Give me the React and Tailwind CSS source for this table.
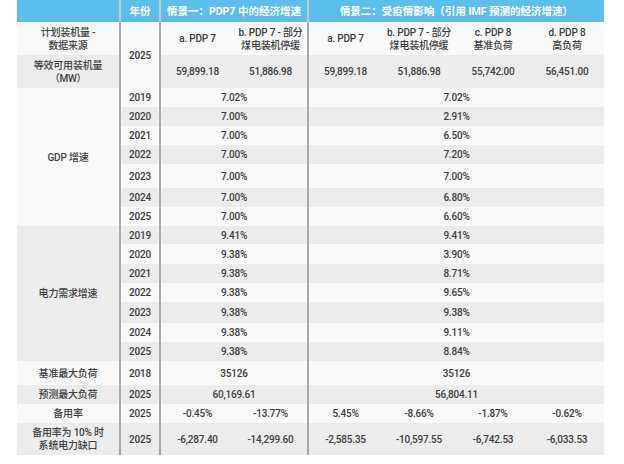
const LINE = 'border-[#a9a9a9]'
const WHITE = 'bg-[#fafafa]'
const GRAY = 'bg-[#ececec]'

const gdp = [
  ['2019', '7.02%', '7.02%', 'h-[19px]'],
  ['2020', '7.00%', '2.91%', 'h-[19px]'],
  ['2021', '7.00%', '6.50%', 'h-[19px]'],
  ['2022', '7.00%', '7.20%', 'h-[19px]'],
  ['2023', '7.00%', '7.00%', 'h-[24px]'],
  ['2024', '7.00%', '6.80%', 'h-[19px]'],
  ['2025', '7.00%', '6.60%', 'h-[19px]'],
]

const power = [
  ['2019', '9.41%', '9.41%', 'h-[18px]'],
  ['2020', '9.38%', '3.90%', 'h-[20px]'],
  ['2021', '9.38%', '8.71%', 'h-[19px]'],
  ['2022', '9.38%', '9.65%', 'h-[19px]'],
  ['2023', '9.38%', '9.38%', 'h-[21px]'],
  ['2024', '9.38%', '9.11%', 'h-[19px]'],
  ['2025', '9.38%', '8.84%', 'h-[19px]'],
]

function Year({ children, rowSpan, className = '' }) {
  return (
    <td rowSpan={rowSpan} className={`border-x-2 ${LINE} ${className}`}>
      {children}
    </td>
  )
}

function SplitRow({ label, year, s1, s2, bg, h }) {
  return (
    <tr className={`${bg} ${h}`}>
      <td>{label}</td>
      <Year>{year}</Year>
      <td colSpan={2} className={`border-r-2 ${LINE}`}>{s1}</td>
      <td colSpan={4}>{s2}</td>
    </tr>
  )
}

export default function App() {
  return (
    <div className="w-[624px] h-[464px] bg-white pl-[17px] font-['Roboto','Noto_Sans_CJK_SC',sans-serif] text-[10px] leading-[13px] font-medium text-[#404040] tracking-[-0.2px]">
      <table className="w-[587px] table-fixed border-collapse text-center [&_td]:p-0 [&_td]:align-middle [&_th]:p-0">
        <colgroup>
          <col className="w-[103px]" />
          <col className="w-[40px]" />
          <col className="w-[74px]" />
          <col className="w-[74px]" />
          <col className="w-[74px]" />
          <col className="w-[74px]" />
          <col className="w-[74px]" />
          <col className="w-[74px]" />
        </colgroup>
        <thead>
          <tr className="h-[22px] bg-[#5cbfeb] text-white text-[10.5px] font-bold tracking-normal">
            <th></th>
            <th className="border-x-2 border-[#b9cdd6]">年份</th>
            <th colSpan={2} className="border-r-2 border-[#b9cdd6]">情景一：PDP7 中的经济增速</th>
            <th colSpan={4}>情景二：受疫情影响（引用 IMF 预测的经济增速）</th>
          </tr>
        </thead>
        <tbody>
          <tr className={`${WHITE} h-[33px]`}>
            <td>计划装机量 -<br />数据来源</td>
            <Year rowSpan={2} className={WHITE}>2025</Year>
            <td>a. PDP 7</td>
            <td className={`border-r-2 ${LINE}`}>b. PDP 7 - 部分<br />煤电装机停缓</td>
            <td>a. PDP 7</td>
            <td>b. PDP 7 - 部分<br />煤电装机停缓</td>
            <td>c. PDP 8<br />基准负荷</td>
            <td>d. PDP 8<br />高负荷</td>
          </tr>
          <tr className={`${GRAY} h-[33px]`}>
            <td>等效可用装机量<br />（MW）</td>
            <td>59,899.18</td>
            <td className={`border-r-2 ${LINE}`}>51,886.98</td>
            <td>59,899.18</td>
            <td>51,886.98</td>
            <td>55,742.00</td>
            <td>56,451.00</td>
          </tr>

          {gdp.map(([year, s1, s2, h], i) => (
            <tr key={'g' + year} className={`${i % 2 === 0 ? WHITE : GRAY} ${h}`}>
              {i === 0 && (
                <td rowSpan={gdp.length} className={WHITE}>GDP 增速</td>
              )}
              <Year>{year}</Year>
              <td colSpan={2} className={`border-r-2 ${LINE}`}>{s1}</td>
              <td colSpan={4}>{s2}</td>
            </tr>
          ))}

          {power.map(([year, s1, s2, h], i) => (
            <tr key={'p' + year} className={`${i % 2 === 0 ? GRAY : WHITE} ${h}`}>
              {i === 0 && (
                <td rowSpan={power.length} className={GRAY}>电力需求增速</td>
              )}
              <Year>{year}</Year>
              <td colSpan={2} className={`border-r-2 ${LINE}`}>{s1}</td>
              <td colSpan={4}>{s2}</td>
            </tr>
          ))}

          <SplitRow label="基准最大负荷" year="2018" s1="35126" s2="35126" bg={WHITE} h="h-[24px]" />
          <SplitRow label="预测最大负荷" year="2025" s1="60,169.61" s2="56,804.11" bg={GRAY} h="h-[19px]" />

          <tr className={`${WHITE} h-[19px]`}>
            <td>备用率</td>
            <Year>2025</Year>
            <td>-0.45%</td>
            <td className={`border-r-2 ${LINE}`}>-13.77%</td>
            <td>5.45%</td>
            <td>-8.66%</td>
            <td>-1.87%</td>
            <td>-0.62%</td>
          </tr>
          <tr className={`${GRAY} h-[32px]`}>
            <td>备用率为 10% 时<br />系统电力缺口</td>
            <Year>2025</Year>
            <td>-6,287.40</td>
            <td className={`border-r-2 ${LINE}`}>-14,299.60</td>
            <td>-2,585.35</td>
            <td>-10,597.55</td>
            <td>-6,742.53</td>
            <td>-6,033.53</td>
          </tr>
        </tbody>
      </table>
    </div>
  )
}
